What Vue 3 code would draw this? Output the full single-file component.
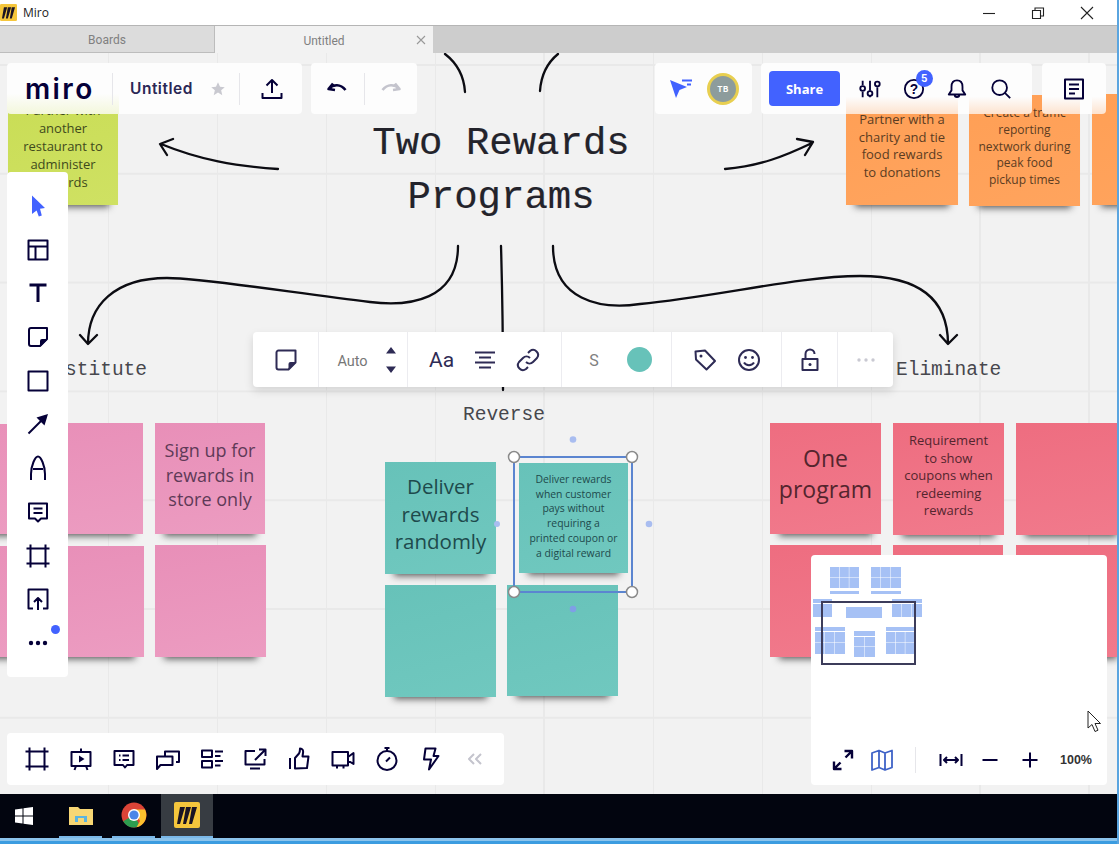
<script setup>
const stickies = [
  { x: 8, y: 95, w: 110, h: 110, c: 'green', fs: 13, lh: 18, pt: 6, lines: ['Partner with', 'another', 'restaurant to', 'administer', 'rewards'] },
  { x: 846, y: 95, w: 112, h: 110, c: 'orange', fs: 13, lh: 17.7, pt: 16, lines: ['Partner with a', 'charity and tie', 'food rewards', 'to donations'] },
  { x: 969, y: 95, w: 111, h: 111, c: 'orange', fs: 12, lh: 16.8, pt: 10, lines: ['Create a traffic', 'reporting', 'nextwork during', 'peak food', 'pickup times'] },
  { x: 1092, y: 94, w: 110, h: 111, c: 'orange', lines: [] },
  { x: -88, y: 424, w: 110, h: 110, c: 'pink', lines: [] },
  { x: 33, y: 423, w: 110, h: 111, c: 'pink', lines: [] },
  { x: 155, y: 423, w: 110, h: 111, c: 'pink', fs: 18, lh: 24.6, pt: 15, lines: ['Sign up for', 'rewards in', 'store only'] },
  { x: -88, y: 546, w: 110, h: 111, c: 'pink', lines: [] },
  { x: 33, y: 546, w: 111, h: 111, c: 'pink', lines: [] },
  { x: 155, y: 545, w: 111, h: 112, c: 'pink', lines: [] },
  { x: 385, y: 462, w: 111, h: 112, c: 'teal', fs: 20.5, lh: 27.5, pt: 11, lines: ['Deliver', 'rewards', 'randomly'] },
  { x: 519, y: 463, w: 109, h: 110, c: 'teal', fs: 10.4, lh: 14.7, pt: 9, lines: ['Deliver rewards', 'when customer', 'pays without', 'requiring a', 'printed coupon or', 'a digital reward'] },
  { x: 385, y: 585, w: 111, h: 112, c: 'teal', lines: [] },
  { x: 507, y: 585, w: 111, h: 111, c: 'teal', lines: [] },
  { x: 770, y: 423, w: 111, h: 111, c: 'red', fs: 23, lh: 31, pt: 20, lines: ['One', 'program'] },
  { x: 893, y: 423, w: 111, h: 112, c: 'red', fs: 13, lh: 17.6, pt: 9, lines: ['Requirement', 'to show', 'coupons when', 'redeeming', 'rewards'] },
  { x: 1016, y: 423, w: 110, h: 112, c: 'red', lines: [] },
  { x: 770, y: 545, w: 111, h: 112, c: 'red', lines: [] },
  { x: 893, y: 545, w: 110, h: 112, c: 'red', lines: [] },
  { x: 1016, y: 545, w: 110, h: 112, c: 'red', lines: [] }
]
const BOARD_TOP = 53
const stickyStyle = (s) => ({
  left: s.x + 'px',
  top: s.y - BOARD_TOP + 'px',
  width: s.w + 'px',
  height: s.h + 'px',
  fontSize: (s.fs || 13) + 'px',
  lineHeight: (s.lh || 18) + 'px',
  paddingTop: (s.pt || 0) + 'px'
})

const frame = 'M0.500 4.500h23 M0.500 19.500h23 M4.500 0.500v23 M19.500 0.500v23'
const sideTools = [
  { d: 'M2.500 2.500h19v19h-19z M2.500 8.500h19 M9.500 8.500v13' },
  { d: 'M3.500 4h17 M12 4v17', heavy: true },
  { d: 'M3 5a2 2 0 0 1 2-2h16v11l-7 7H5a2 2 0 0 1-2-2z', f: 'M21 14v1l-6 6h-1v-5a2 2 0 0 1 2-2z' },
  { d: 'M2.500 2.500h19v19h-19z' },
  { d: 'M2.500 21.500L15 9', f: 'M22 2l-3.500 11.500-8-8z' },
  { d: 'M5 24v-6C5 10 9 0.500 12 0.500S19 10 19 18v6 M7 13h10' },
  { d: 'M3 3.500h18v15h-6l-3 3-3-3H3z M7.500 8.500h9 M7.500 13h9' },
  { d: frame },
  { d: 'M7 21.500H2.500v-19h19v19H17 M12 23V11 M8 15l4-4 4 4' }
]
const bottomTools = [
  { d: frame },
  { d: 'M2.500 5h19v14h-19z M12 1.500V5 M7 19l-1.500 4 M17 19l1.500 4', f: 'M10 8.500v7l5.500-3.500z' },
  { d: 'M2.500 4h19v14h-6.500l-2 2.500-2-2.500h-8.500z M7 8.500h1.500 M10.500 8.500h6.500 M7 13h1.500 M10.500 13h6.500' },
  { d: 'M9 9V4.500h14V15h-3 M1 9.500h15.500V18H4.500L1 22z' },
  { d: 'M2 3.500h10v6.500H2z M2 14h10v6.500H2z M15 4.500h8 M15 9h5.500 M15 14h8 M15 18.500h5.500' },
  { d: 'M12 4H2.500v13.500h19V12 M7 21.500h10 M16 2.500h6.500V9 M22.500 2.500L12 13' },
  { d: 'M8 21.500V11l4-4.500c1-1.500 1-3.500 1-5 2.500 0 3.500 2 3 4.500l-.5 3.500h6l-1.500 11.500z M3 11v11' },
  { d: 'M1.500 5h15.500v13.500H1.500z M17 10l5.500-4v11L17 13.500 M6 18.500v3 M12.500 18.500v3' },
  { d: 'M12 4a9.500 9.500 0 1 1 0 19 9.500 9.500 0 0 1 0-19z M12 1v3 M9.500 1h5 M11 14.500l4-4' },
  { d: 'M7.500 1.500h10l-2 7.500h5L11 22.500l2-10H6z' }
]
const blocks = [
  { x: 830, y: 567, w: 29, h: 21, c: 3, r: 2 }, { x: 830, y: 591, w: 29, h: 3, c: 1, r: 1 },
  { x: 871, y: 567, w: 30, h: 21, c: 3, r: 2 }, { x: 871, y: 591, w: 30, h: 3, c: 1, r: 1 },
  { x: 813, y: 599, w: 19, h: 4, c: 1, r: 1 }, { x: 813, y: 604, w: 19, h: 13, c: 2, r: 1 },
  { x: 846, y: 607, w: 36, h: 11, c: 1, r: 1 },
  { x: 892, y: 599, w: 30, h: 4, c: 1, r: 1 }, { x: 892, y: 604, w: 30, h: 13, c: 3, r: 1 },
  { x: 815, y: 627, w: 30, h: 4, c: 1, r: 1 }, { x: 815, y: 632, w: 30, h: 22, c: 3, r: 2 },
  { x: 854, y: 631, w: 21, h: 5, c: 1, r: 1 }, { x: 854, y: 637, w: 21, h: 20, c: 2, r: 2 },
  { x: 886, y: 627, w: 29, h: 4, c: 1, r: 1 }, { x: 886, y: 632, w: 29, h: 22, c: 3, r: 2 }
]
const cells = blocks.flatMap((b) => {
  const out = []
  const cw = b.w / b.c
  const ch = b.h / b.r
  for (let i = 0; i < b.c; i++) {
    for (let j = 0; j < b.r; j++) {
      out.push({ x: b.x + i * cw, y: b.y + j * ch, w: cw - (i < b.c - 1 ? 0.5 : 0), h: ch - (j < b.r - 1 ? 0.5 : 0) })
    }
  }
  return out
})
</script>

<template>
  <div class="shell">
    <header class="titlebar">
      <div class="title-left">
        <svg class="app-icon" viewBox="0 0 26 26"><rect width="26" height="26" rx="2" fill="#f5c63c" /><path d="M6 5h5L6 22H3zM12 5h5l-5 17H9zM18 5h5l-5 17h-3z" fill="#1a1424" /></svg>
        <span>Miro</span>
      </div>
      <div class="win-controls">
        <svg viewBox="0 0 14 14"><path d="M1 7.500h12" /></svg>
        <svg viewBox="0 0 14 14"><path d="M1.500 4.500h8v8h-8z M4 4.500V2h8.500v8H9.500" /></svg>
        <svg viewBox="0 0 14 14"><path d="M1 1l12 12M13 1L1 13" /></svg>
      </div>
    </header>

    <nav class="tabs">
      <div class="tab tab-idle">Boards</div>
      <div class="tab tab-active">
        Untitled
        <svg class="tab-close" viewBox="0 0 10 10"><path d="M1 1l8 8M9 1L1 9" /></svg>
      </div>
    </nav>

    <main class="board">
      <div v-for="(s, i) in stickies" :key="i" class="sticky" :class="s.c" :style="stickyStyle(s)">
        <div v-for="l in s.lines" :key="l">{{ l }}</div>
      </div>

      <svg class="wires" viewBox="0 53 1119 741">
        <path d="M445 54C458 64 464 76 465 92" />
        <path d="M540 91C541 76 547 63 558 54" />
        <path d="M278 169C235 166 200 160 161 144M173 139L160 144L167 155" />
        <path d="M725 169C760 166 785 156 812 143M797 139L813 142L805 155" />
        <path d="M458 246C458 300 410 307 370 302C300 294 205 278 167 278C115 278 88 305 88 344M80 335L88 344L97 335" />
        <path d="M501 246C502 280 503 340 503 390" />
        <path d="M553 246C553 300 600 310 640 304C720 296 800 276 860 276C920 276 948 300 948 344M940 335L948 344L957 335" />
      </svg>

      <div class="heading">Two Rewards<br />Programs</div>
      <div class="label label-sub">Substitute</div>
      <div class="label label-rev">Reverse</div>
      <div class="label label-eli">Eliminate</div>

      <svg class="selection" viewBox="0 0 150 184">
        <rect x="15" y="21" width="118" height="135" fill="none" stroke="#5b85d0" stroke-width="2" />
        <circle cx="74" cy="3.500" r="3.300" fill="#a9bdf0" />
        <circle cx="74" cy="173" r="3.300" fill="#7f9fe6" />
        <circle cx="150" cy="88" r="3.300" fill="#a9bdf0" />
        <g fill="#fff" stroke="#8a8a8a" stroke-width="1.500">
          <circle cx="15" cy="21" r="5.500" /><circle cx="133" cy="21" r="5.500" />
          <circle cx="15" cy="156" r="5.500" /><circle cx="133" cy="156" r="5.500" />
        </g>
      </svg>
      <span class="sel-dot"></span>

      <!-- top left -->
      <div class="panel top-main">
        <span class="logo">miro</span>
        <i class="vline"></i>
        <span class="board-name">Untitled</span>
        <svg class="ico star" viewBox="0 0 24 24"><path d="M12 3l2.700 6 6.300.6-4.800 4.200 1.500 6.400-5.700-3.400-5.700 3.400 1.500-6.400L3 9.600 9.300 9z" /></svg>
        <i class="vline"></i>
        <svg class="ico" viewBox="0 0 24 24"><path d="M12 16V3M6.500 8.500L12 3l5.500 5.500M2.500 16v5h19v-5" /></svg>
      </div>
      <div class="panel top-undo">
        <svg class="ico" viewBox="0 0 24 24"><path class="heavy" d="M8 6.500L3.500 12l6.500 1M3.500 12c5-5 12-5.500 17 1" /></svg>
        <i class="vline"></i>
        <svg class="ico dim" viewBox="0 0 24 24"><path class="heavy" d="M16 6.500l4.500 5.500-6.500 1M20.500 12c-5-5-12-5.500-17 1" /></svg>
      </div>

      <!-- top right -->
      <div class="panel top-people">
        <svg class="ico" viewBox="0 0 24 24"><path class="blue" d="M1 3l17 7-7.500 3L7 21z" /><path class="blue-s" d="M13 3.500h10M18 7.500h4" /></svg>
        <span class="avatar">TB</span>
      </div>
      <div class="panel top-actions">
        <button class="share">Share</button>
        <svg class="ico" viewBox="0 0 24 24"><path d="M4 3v5M4 15v6M12 3v11M12 20v1M20 3v0M20 10v11" /><circle cx="4" cy="11.500" r="2.600" /><circle cx="12" cy="17" r="2.600" /><circle cx="20" cy="6.500" r="2.600" /></svg>
        <span class="help">
          <svg class="ico" viewBox="0 0 24 24"><circle cx="12" cy="12" r="10" /><text x="12" y="17.500" class="q">?</text></svg>
          <b class="badge">5</b>
        </span>
        <svg class="ico" viewBox="0 0 24 24"><path d="M12 2.500c-4 0-6 3-6 7v4l-3 4.500h18l-3-4.500v-4c0-4-2-7-6-7zM9.500 18.500c0 3 5 3 5 0" /></svg>
        <svg class="ico" viewBox="0 0 24 24"><circle cx="10.500" cy="10.500" r="8" /><path d="M16.500 16.500l5.500 5.500" /></svg>
      </div>
      <div class="panel top-notes">
        <svg class="ico" viewBox="0 0 24 24"><path d="M3 2.500h18v19H3zM7 7.500h10M7 12h10M7 16.500h6" /></svg>
      </div>

      <!-- side tools -->
      <aside class="panel side">
        <svg class="ico" viewBox="0 0 24 24"><path class="blue" d="M6 1.500l13 12.500-5 .8 1.800 6.700-3 1-2.200-6-4.600 3.500z" /></svg>
        <svg v-for="(t, i) in sideTools" :key="i" class="ico" viewBox="0 0 24 24">
          <path :class="{ thick: t.heavy }" :d="t.d" />
          <path v-if="t.f" class="solid" :d="t.f" />
        </svg>
        <span class="more-wrap">
          <svg class="ico" viewBox="0 0 24 24"><circle class="solid" cx="5" cy="12" r="2.200" /><circle class="solid" cx="12" cy="12" r="2.200" /><circle class="solid" cx="19" cy="12" r="2.200" /></svg>
          <b class="more-dot"></b>
        </span>
      </aside>

      <!-- context toolbar -->
      <div class="panel context">
        <section class="ctx s1">
          <svg class="ico" viewBox="0 0 24 24"><path d="M2.500 4.500a2 2 0 0 1 2-2h17v12l-7 7h-10a2 2 0 0 1-2-2z" /><path class="solid" d="M21.500 14v1l-6 6h-1v-5a2 2 0 0 1 2-2z" /></svg>
        </section>
        <section class="ctx s2">
          <span class="auto">Auto</span>
          <svg class="steppers" viewBox="0 0 12 28"><path d="M6 1l5 6.500H1zM6 27l-5-6.500h10z" /></svg>
        </section>
        <section class="ctx s3">
          <span class="aa">Aa</span>
          <svg class="ico" viewBox="0 0 24 24"><path d="M2 4.500h20M6 9.500h12M2 14.500h20M6 19.500h12" /></svg>
          <svg class="ico" viewBox="0 0 24 24"><path d="M10 14a5 5 0 0 0 7 0l4-4a5 5 0 0 0-7-7l-2 2M14 10a5 5 0 0 0-7 0l-4 4a5 5 0 0 0 7 7l2-2" /></svg>
        </section>
        <section class="ctx s4">
          <span class="size">S</span>
          <b class="swatch"></b>
        </section>
        <section class="ctx s5">
          <svg class="ico" viewBox="0 0 24 24"><path d="M2.500 3.500l9.500-1 10 10.500-8.500 8.500L3 11.500z" /><circle class="solid" cx="8" cy="8" r="1.500" /></svg>
          <svg class="ico" viewBox="0 0 24 24"><circle cx="12" cy="12" r="10" /><circle class="solid" cx="8.500" cy="9.500" r="1.400" /><circle class="solid" cx="15.500" cy="9.500" r="1.400" /><path d="M7 14.500c2 3.500 8 3.500 10 0" /></svg>
        </section>
        <section class="ctx s6">
          <svg class="ico" viewBox="0 0 24 24"><path d="M4.500 11h15v11h-15zM7.500 11V6a4.500 4.500 0 0 1 9 0" /><circle class="solid" cx="12" cy="16.500" r="1.500" /></svg>
        </section>
        <section class="ctx s7">
          <svg class="ico" viewBox="0 0 24 24"><circle class="faint" cx="5" cy="12" r="1.700" /><circle class="faint" cx="12" cy="12" r="1.700" /><circle class="faint" cx="19" cy="12" r="1.700" /></svg>
        </section>
      </div>

      <!-- bottom tools -->
      <div class="panel dock">
        <svg v-for="(t, i) in bottomTools" :key="i" class="ico" viewBox="0 0 24 24">
          <path :d="t.d" />
          <path v-if="t.f" class="solid" :d="t.f" />
        </svg>
        <svg class="ico dim" viewBox="0 0 24 24"><path d="M12 7l-5 5 5 5M19 7l-5 5 5 5" /></svg>
      </div>

      <!-- minimap -->
      <div class="panel minimap">
        <svg class="map" viewBox="811 555 296 170">
          <rect v-for="(c, i) in cells" :key="i" :x="c.x" :y="c.y" :width="c.w" :height="c.h" fill="#a6c1f5" />
          <rect x="822" y="602" width="93" height="62" fill="none" stroke="#3c3c5a" stroke-width="2" />
        </svg>
        <div class="map-tools">
          <svg class="ico" viewBox="0 0 24 24"><path class="thickish" d="M3 21l6.500-6.500M3 13.500V21h7.500M21 3l-6.500 6.500M13.500 3H21v7.500" /></svg>
          <svg class="ico map-ico" viewBox="0 0 24 24"><path d="M2 5l7-2.500 6 2.500 7-2.500v17l-7 2.500-6-2.500-7 2.500zM9 2.500v17M15 5v17" /></svg>
          <i class="vline tall"></i>
          <svg class="ico" viewBox="0 0 24 24"><path d="M1.500 6v12M22.500 6v12M5 12h14M8 9l-3 3 3 3M16 9l3 3-3 3" /></svg>
          <svg class="ico" viewBox="0 0 24 24"><path d="M4.500 12h15" /></svg>
          <svg class="ico plus" viewBox="0 0 24 24"><path d="M4.500 12h15M12 4.500v15" /></svg>
          <span class="zoom">100%</span>
        </div>
      </div>

      <svg class="pointer" viewBox="0 0 15 23"><path d="M1 1v17l4-3.500 3 7 3-1.300-3-6.700h5.500z" fill="#fff" stroke="#222" stroke-width="1" /></svg>
    </main>

    <footer class="taskbar">
      <svg class="win" viewBox="0 0 18 18"><path d="M0 2.500l7.500-1v7H0zM8.500 1.300L18 0v8.500H8.500zM0 9.500h7.500v7L0 15.500zM8.500 9.500H18V18l-9.500-1.300z" fill="#fff" /></svg>
      <div class="task running">
        <svg viewBox="0 0 24 24" width="24" height="24"><path d="M0 4h9l2 2h13v16H0z" fill="#f7d774" /><path d="M6 13h12v6H6z" fill="#5bb4e0" /><path d="M9 15h6v4H9z" fill="#f7d774" /></svg>
      </div>
      <div class="task running">
        <svg viewBox="0 0 26 26" width="26" height="26">
          <circle cx="13" cy="13" r="12.500" fill="#db4437" />
          <path d="M13 13L2.200 19.200A12.500 12.500 0 0 0 13 25.500a12 12 0 0 0 6-1.700z" fill="#2d9d4f" />
          <path d="M13 7.500h11a12.500 12.500 0 0 1-8.500 17.800L19 19z" fill="#fbc02d" />
          <circle cx="13" cy="13" r="6" fill="#fff" /><circle cx="13" cy="13" r="4.600" fill="#4a86e8" />
        </svg>
      </div>
      <div class="task active">
        <svg viewBox="0 0 26 26" width="26" height="26"><rect width="26" height="26" rx="2" fill="#f5c63c" /><path d="M6 5h5L6 22H3zM12 5h5l-5 17H9zM18 5h5l-5 17h-3z" fill="#1a1424" /></svg>
      </div>
    </footer>
    <div class="strip"></div>
  </div>
</template>

<style>
html, body { margin: 0; background: #fff; }
</style>

<style scoped>
.shell {
  width: 1117px;
  height: 844px;
  display: flex;
  flex-direction: column;
  overflow: hidden;
  border-right: 2px solid #5aa5e0;
  font-family: "Open Sans", "Liberation Sans", sans-serif;
}
.titlebar {
  height: 25px;
  flex: none;
  display: flex;
  justify-content: space-between;
  align-items: center;
  background: #fff;
  border-bottom: 1px solid #b5b5b5;
}
.title-left { display: flex; align-items: center; gap: 6px; font-size: 12px; color: #222; }
.app-icon { width: 17px; height: 17px; }
.win-controls { display: flex; gap: 35px; padding-right: 23px; }
.win-controls svg { width: 14px; height: 14px; fill: none; stroke: #222; stroke-width: 1.100; }
.tabs { height: 27px; flex: none; display: flex; background: #cdcdcd; }
.tab {
  width: 216px;
  display: flex;
  align-items: center;
  justify-content: center;
  padding-top: 2px;
  font-size: 12px;
  color: #808080;
  font-family: "Roboto", sans-serif;
  box-sizing: border-box;
}
.tab-idle { width: 215px; background: #dcdcdc; border-right: 1px solid #bcbcbc; border-bottom: 1px solid #bdbdbd; }
.tab-active { width: 218px; background: #f2f2f2; position: relative; }
.tab-close { position: absolute; right: 7px; top: 9px; width: 10px; height: 10px; fill: none; stroke: #999; stroke-width: 1.100; }

.board {
  flex: 1;
  position: relative;
  overflow: hidden;
  background-color: #f2f2f2;
  background-image:
    linear-gradient(to right, #e9e9e9 1.500px, transparent 1.500px),
    linear-gradient(to bottom, #e9e9e9 1.500px, transparent 1.500px);
  background-size: 109px 108.800px;
  background-position: -2px 11px;
}
.sticky {
  position: absolute;
  box-sizing: border-box;
  text-align: center;
  color: #3b2a3a;
  box-shadow: 0 11px 7px -9px rgba(25, 25, 25, 0.7);
  white-space: nowrap;
}
.green { background: linear-gradient(160deg, #c9dd55, #cfe163); color: #3f4a1c; }
.orange { background: linear-gradient(160deg, #ff9f55, #ffa45e); color: #5b3c22; }
.pink { background: linear-gradient(170deg, #e88fb8, #ec9cc1); color: #5e3a57; }
.teal { background: linear-gradient(165deg, #67c2b9, #70c8bf); color: #1e4a4c; }
.red { background: linear-gradient(170deg, #ee6d80, #f17a8c); color: #54252e; }

.wires { position: absolute; left: 0; top: 0; width: 1119px; height: 741px; fill: none; stroke: #0c0c12; stroke-width: 2.300; stroke-linecap: round; stroke-linejoin: round; }
.heading {
  position: absolute;
  left: 301px;
  top: 64px;
  width: 400px;
  text-align: center;
  font-family: "Liberation Mono", monospace;
  font-size: 39px;
  line-height: 54px;
  color: #23232b;
  -webkit-text-stroke: 0.200px #23232b;
}
.label { position: absolute; font-family: "Liberation Mono", monospace; font-size: 19.500px; line-height: 24px; color: #47474d; }
.label-sub { left: 30px; top: 305px; }
.label-rev { left: 463px; top: 350px; }
.label-eli { left: 896px; top: 305px; }
.selection { position: absolute; left: 499px; top: 383px; width: 150px; height: 184px; overflow: visible; }
.sel-dot { position: absolute; left: 494px; top: 468px; width: 6px; height: 6px; border-radius: 50%; background: #a9bdf0; }

.panel { position: absolute; background: #fff; border-radius: 4px; }
.ico { width: 24px; height: 24px; flex: none; fill: none; stroke: #050038; stroke-width: 2; stroke-linejoin: round; overflow: visible; }
.ico .solid { fill: #050038; stroke: none; }
.ico .blue { fill: #4262ff; stroke: none; }
.ico .blue-s { stroke: #4262ff; }
.ico .thick { stroke-width: 3; }
.ico .heavy { stroke-width: 2.600; }
.ico .thickish { stroke-width: 2.400; }
.ico .faint { fill: #c9c9d2; stroke: none; }
.ico.dim { stroke: #c4c4cd; }
.ico.star { width: 18px; height: 18px; fill: #c9c9d0; stroke: none; }
.vline { display: block; width: 1px; height: 32px; background: #e6e6ea; flex: none; }

.top-main {
  left: 7px; top: 10px; width: 295px; height: 51px; display: flex; align-items: center; box-sizing: border-box; padding-left: 18px;
  background: linear-gradient(to bottom, rgba(207, 225, 99, 0) 60%, rgba(207, 225, 99, 0.22)) 0 0 / 112px 100% no-repeat, #fdfdfd;
}
.logo { width: 87px; font-family: "Inter", sans-serif; font-weight: 600; font-size: 28px; letter-spacing: 2.400px; color: #050038; }
.board-name { margin-left: 17px; width: 68px; font-family: "Inter", sans-serif; font-size: 15.500px; font-weight: 600; letter-spacing: 0.500px; color: #2a2755; white-space: nowrap; }
.top-main .star { margin-left: 11px; }
.top-main .star + .vline { margin-left: 12px; }
.top-main .vline + .ico { margin-left: 20px; }
.top-undo { left: 311px; top: 10px; width: 106px; height: 51px; display: flex; align-items: center; justify-content: space-between; box-sizing: border-box; padding: 0 14px; background: #fdfdfd; }
.top-people { left: 655px; top: 10px; width: 97px; height: 51px; display: flex; align-items: center; gap: 14px; box-sizing: border-box; padding-left: 14px; background: #fdfdfd; }
.avatar {
  width: 26px; height: 26px; border-radius: 50%; background: #8d9c9c; border: 3px solid #e8cf50;
  color: #fff; font-size: 8px; font-weight: 700; display: flex; align-items: center; justify-content: center;
  font-family: "Inter", sans-serif; letter-spacing: 0.500px;
}
.top-actions {
  left: 761px; top: 10px; width: 271px; height: 51px; display: flex; align-items: center; box-sizing: border-box; padding-left: 8px; gap: 21.700px;
  background:
    linear-gradient(to bottom, rgba(255, 159, 85, 0) 66%, rgba(255, 159, 85, 0.28)) 85px 0 / 112px 100% no-repeat,
    linear-gradient(to bottom, rgba(255, 159, 85, 0) 66%, rgba(255, 159, 85, 0.28)) 208px 0 / 63px 100% no-repeat,
    #fdfdfd;
}
.top-actions .ico { width: 22px; height: 22px; }
.share {
  width: 71px; height: 35px; margin-right: -2.700px; border: 0; border-radius: 4px; background: #4262ff; color: #fff;
  font-family: "Open Sans", sans-serif; font-size: 13px; font-weight: 700; padding: 0;
}
.help { position: relative; display: flex; }
.q { font-family: "Liberation Sans", sans-serif; font-size: 15px; font-weight: 700; text-anchor: middle; fill: #050038; stroke: none; }
.badge {
  position: absolute; left: 13px; top: -8px; width: 17px; height: 17px; border-radius: 50%; background: #4262ff; color: #fff;
  font-family: "Inter", sans-serif; font-size: 10px; line-height: 17px; text-align: center;
}
.top-notes {
  left: 1042px; top: 10px; width: 64px; height: 51px; display: flex; align-items: center; justify-content: center;
  background:
    linear-gradient(to bottom, rgba(255, 159, 85, 0) 66%, rgba(255, 159, 85, 0.28)) 0 0 / 38px 100% no-repeat,
    linear-gradient(to bottom, rgba(255, 159, 85, 0) 66%, rgba(255, 159, 85, 0.28)) 50px 0 / 14px 100% no-repeat,
    #fdfdfd;
}

.side { left: 7px; top: 119px; width: 61px; height: 505px; display: flex; flex-direction: column; align-items: center; box-sizing: border-box; padding-top: 22px; gap: 19.700px; }
.more-wrap { position: relative; display: flex; }
.more-dot { position: absolute; left: 25px; top: -6px; width: 9px; height: 9px; border-radius: 50%; background: #4262ff; }

.context {
  left: 253px; top: 279px; width: 640px; height: 55px; display: flex;
  box-shadow: 0 4px 10px rgba(0, 0, 0, 0.13);
}
.ctx { display: flex; align-items: center; justify-content: center; box-sizing: border-box; border-right: 1px solid #ececf0; color: #050038; }
.ctx:last-child { border-right: 0; }
.ctx .ico { stroke: #2e2b55; }
.ctx .ico .solid { fill: #2e2b55; }
.s1 { width: 66px; }
.s2 { width: 89px; gap: 17px; padding-left: 8px; }
.s3 { width: 154px; gap: 19px; }
.s4 { width: 110px; gap: 28px; padding-left: 8px; }
.s5 { width: 110px; gap: 20px; }
.s6 { width: 56px; }
.s7 { width: 55px; }
.auto { font-family: "Roboto", sans-serif; font-size: 14.500px; color: #777; padding-top: 3px; }
.steppers { width: 12px; height: 28px; fill: #2e2b55; }
.aa { font-family: "Roboto", sans-serif; font-size: 21px; color: #2e2b55; }
.size { font-family: "Roboto", sans-serif; font-size: 16px; color: #808080; padding-top: 2px; }
.swatch { width: 25px; height: 25px; border-radius: 50%; background: #67c2b9; }

.dock { left: 7px; top: 680px; width: 497px; height: 52px; display: flex; align-items: center; box-sizing: border-box; padding-left: 18px; gap: 19.700px; }

.minimap { left: 811px; top: 502px; width: 296px; height: 230px; }
.map { position: absolute; left: 0; top: 0; width: 296px; height: 170px; overflow: visible; }
.map-tools { position: absolute; left: 20px; top: 192px; display: flex; align-items: center; gap: 15px; }
.map-tools .map-ico { stroke: #3f63c7; stroke-width: 1.800; }
.map-tools .tall { height: 26px; margin: 0 8px 0 6px; }
.map-tools .plus { margin-left: 1px; }
.zoom { font-family: "Liberation Sans", sans-serif; font-size: 12.500px; font-weight: 700; color: #333; margin-left: 3px; }
.pointer { position: absolute; left: 1087px; top: 657px; width: 15px; height: 23px; }

.taskbar {
  height: 44px;
  flex: none;
  display: flex;
  background: #02050f;
  align-items: stretch;
}
.win { width: 18px; height: 18px; margin: 13px 26px 0 15px; }
.task { display: flex; align-items: center; justify-content: center; width: 43px; margin-right: 10px; border-bottom: 2px solid transparent; box-sizing: border-box; }
.task.running { border-bottom-color: #7ab8e8; }
.task.active { width: 52px; margin-left: -4px; margin-right: 0; background: #373c42; border-bottom-color: #7ab8e8; }
.strip { height: 6px; flex: none; background: linear-gradient(to bottom, #8cc4ec 50%, #3c9ce0 50%); }
</style>
